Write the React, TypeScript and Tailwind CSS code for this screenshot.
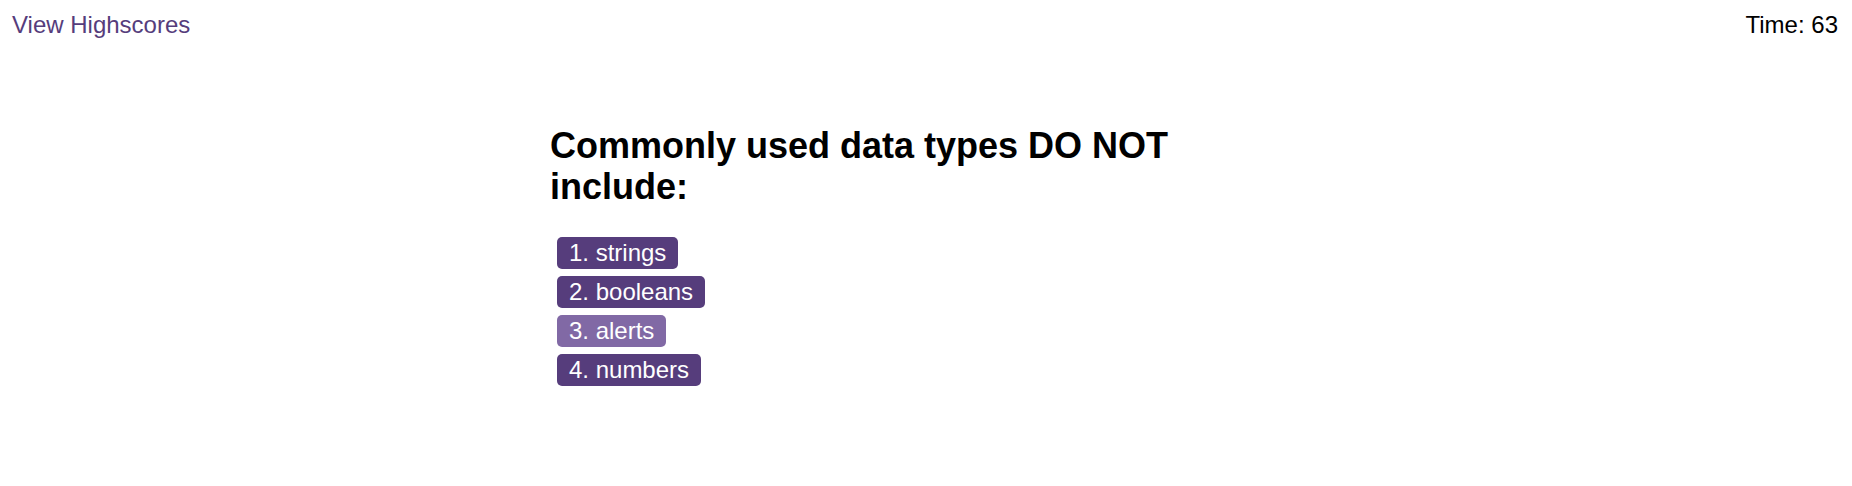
const choices = ['1. strings', '2. booleans', '3. alerts', '4. numbers'];

export default function App() {
  const hovered = 2;

  return (
    <div className="min-h-[486px] bg-white text-black font-['Liberation_Sans',Arial,sans-serif]">
      {/* Header */}
      <header className="flex items-start justify-between pl-3 pr-[14px] pt-[11px] text-[24px] leading-[28px]">
        <a href="#" className="text-[#563d7c]">
          View Highscores
        </a>
        <span>Time: 63</span>
      </header>

      {/* Question */}
      <main className="mx-auto w-[752px] pt-[86px]">
        <h2 className="text-[36px] font-bold leading-[41px]">Commonly used data types DO NOT include:</h2>
        <div className="mt-[30px] ml-[7px] flex flex-col items-start gap-[7px]">
          {choices.map((c, i) => (
            <button
              key={c}
              className={`rounded-[5px] px-3 h-[32px] text-[24px] leading-[28px] text-white ${
                i === hovered ? 'bg-[#8169a5]' : 'bg-[#563d7c]'
              }`}
            >
              {c}
            </button>
          ))}
        </div>
      </main>
    </div>
  );
}
